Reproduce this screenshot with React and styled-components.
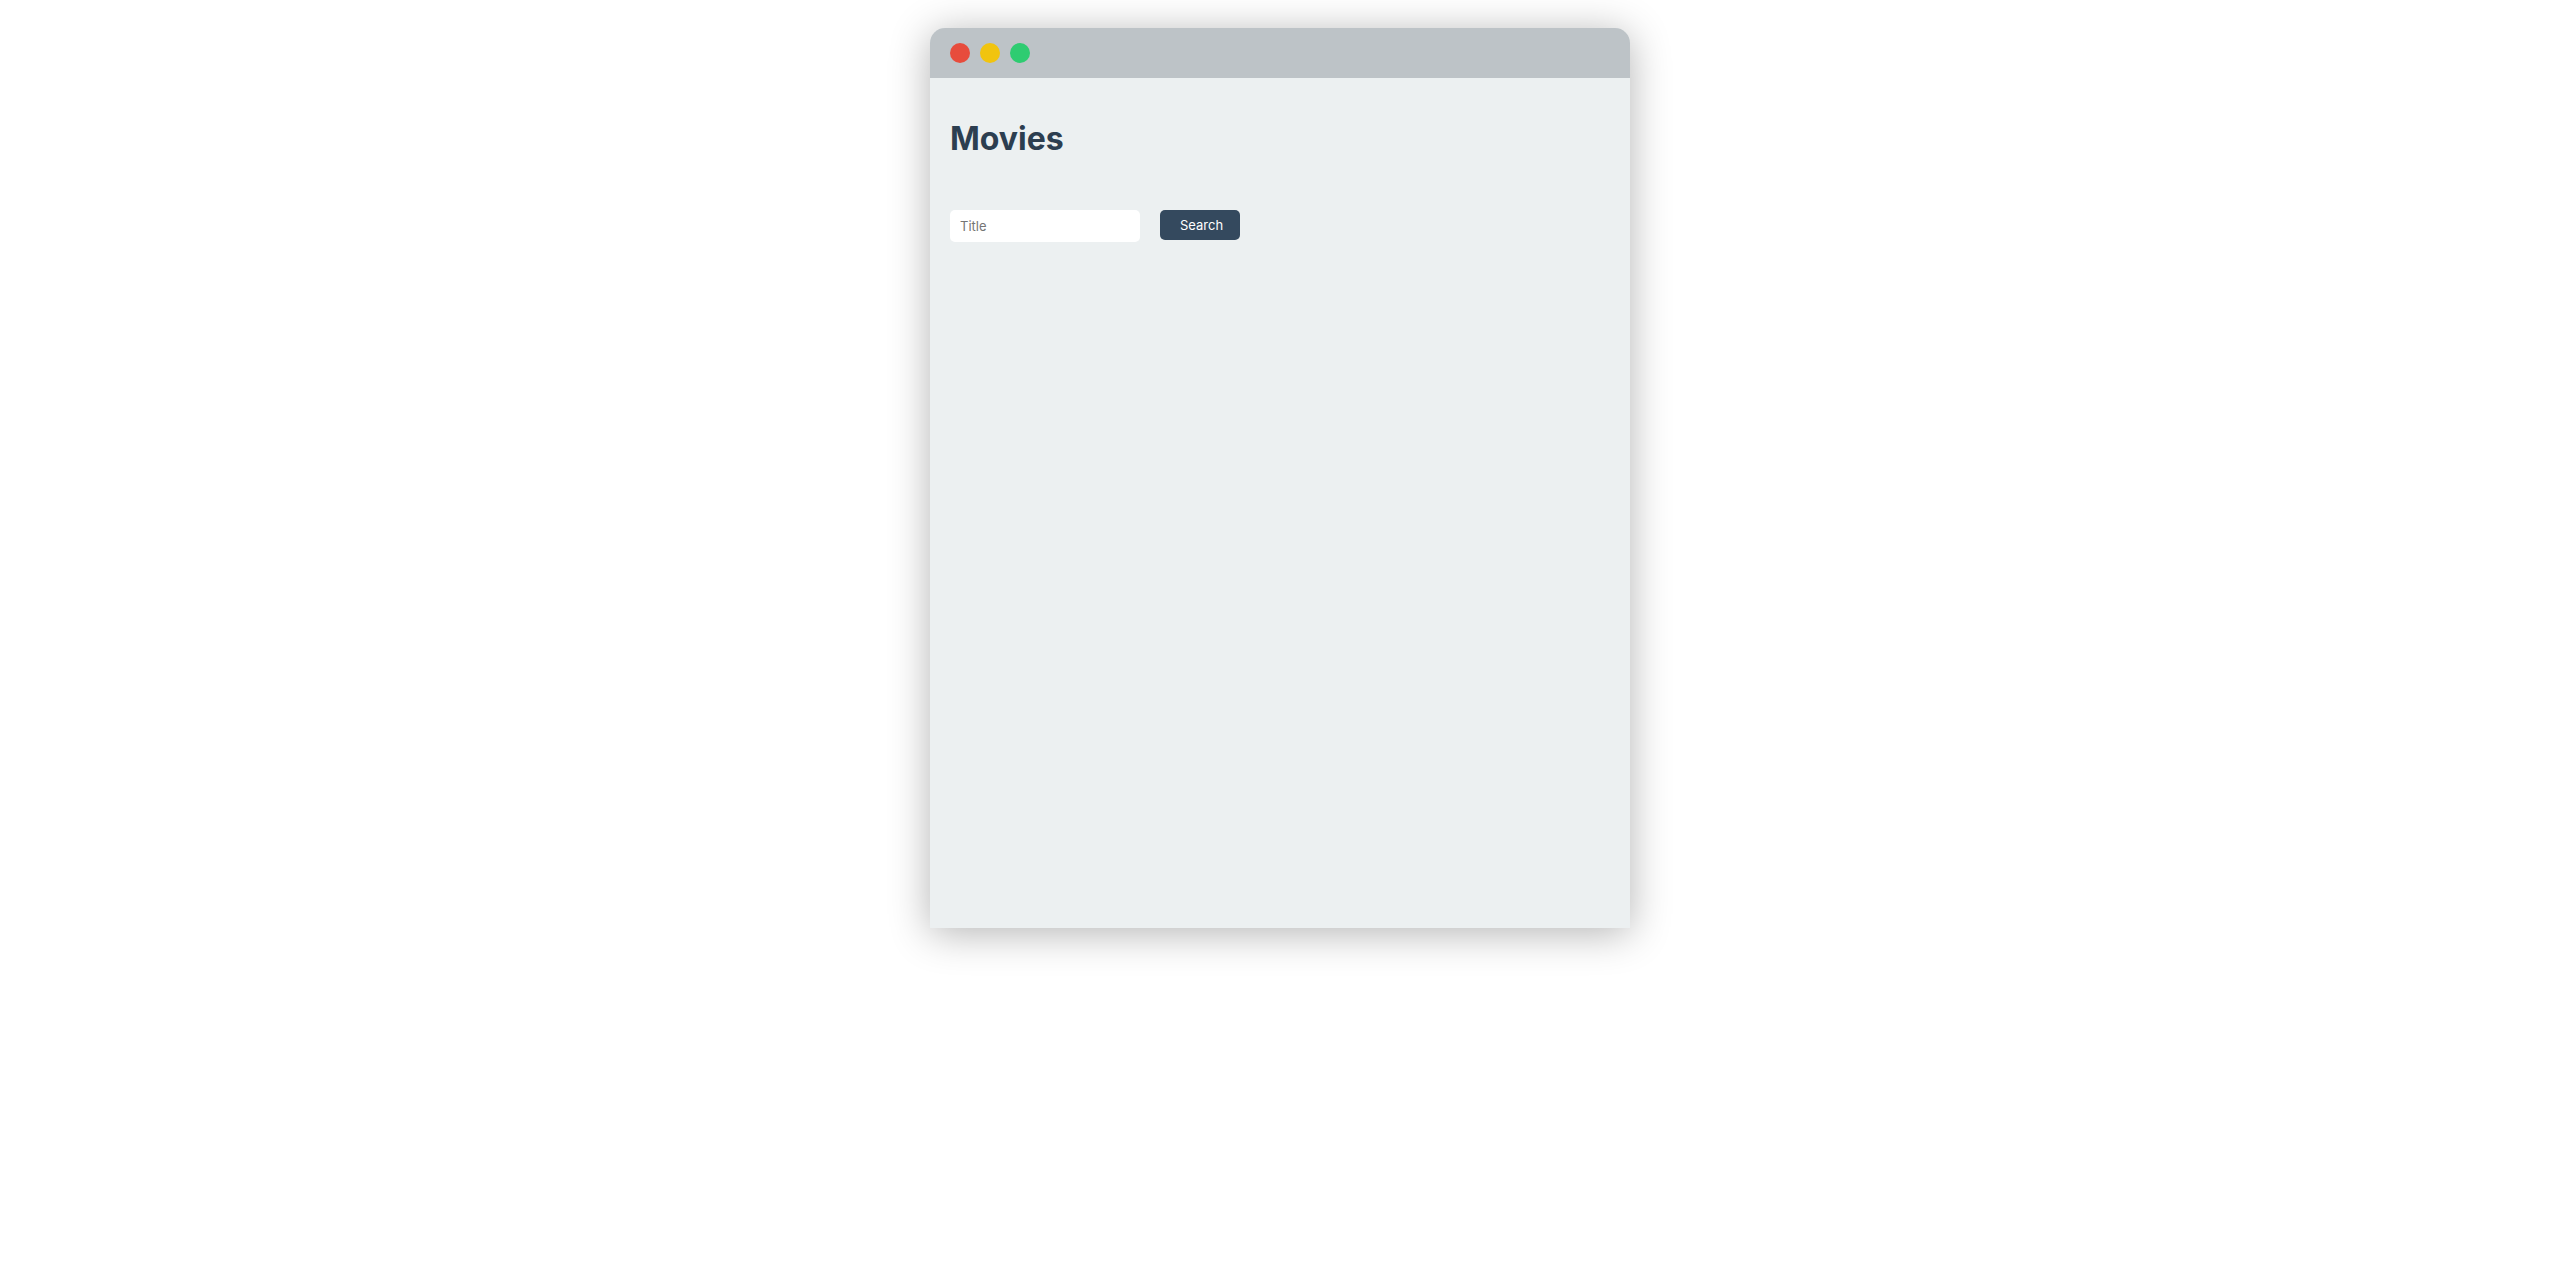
import React from "react";
import styled, { createGlobalStyle } from "styled-components";

const GlobalStyle = createGlobalStyle`
  *, *::before, *::after {
    box-sizing: border-box;
  }
  body {
    margin: 0;
    background: #fff;
    color: #2c3e50;
    font-family: Inter, "Liberation Sans", sans-serif;
  }
`;

const Page = styled.div`
  display: flex;
  justify-content: center;
  align-items: flex-start;
  min-height: 100vh;
  padding: 28px 20px;
`;

const Window = styled.main`
  width: 100%;
  max-width: 700px;
  min-height: 900px;
  background: #ecf0f1;
  border-radius: 15px 15px 0 0;
  box-shadow: 0 5px 40px rgba(0, 0, 0, 0.3);
`;

const TitleBar = styled.div`
  display: flex;
  align-items: center;
  gap: 10px;
  height: 50px;
  padding: 0 20px;
  background: #bdc3c7;
  border-radius: 15px 15px 0 0;
`;

const Dot = styled.span`
  width: 20px;
  height: 20px;
  border-radius: 50%;
  background: ${({ $color }) => $color};
`;

const Content = styled.div`
  display: flex;
  flex-direction: column;
  gap: 50px;
  padding: 40px 20px;
`;

const Heading = styled.h1`
  margin: 0;
  font-size: 32px;
  font-weight: 700;
  line-height: 42px;
`;

const SearchForm = styled.form`
  display: flex;
  align-items: flex-start;
  gap: 20px;
`;

const TextField = styled.input`
  width: 190px;
  height: 32px;
  padding: 0 10px;
  border: 0;
  border-radius: 5px;
  background: #fff;
  font: 400 13px/16px Inter, "Liberation Sans", sans-serif;
`;

const SearchButton = styled.button`
  width: 80px;
  height: 30px;
  padding: 0 10px 0 20px;
  border: 0;
  border-radius: 5px;
  background: #34495e;
  color: #fff;
  font: 400 13px/16px Inter, "Liberation Sans", sans-serif;
  text-align: left;
  cursor: pointer;
`;

const controls = ["#e74c3c", "#f1c40f", "#2ecc71"];

export default function App() {
  return (
    <>
      <GlobalStyle />
      <Page>
        <Window>
          <TitleBar>
            {controls.map((color) => (
              <Dot key={color} $color={color} />
            ))}
          </TitleBar>
          <Content>
            <Heading>Movies</Heading>
            <SearchForm onSubmit={(event) => event.preventDefault()}>
              <TextField type="text" name="title" aria-label="Title" placeholder="Title" />
              <SearchButton type="submit">Search</SearchButton>
            </SearchForm>
          </Content>
        </Window>
      </Page>
    </>
  );
}
